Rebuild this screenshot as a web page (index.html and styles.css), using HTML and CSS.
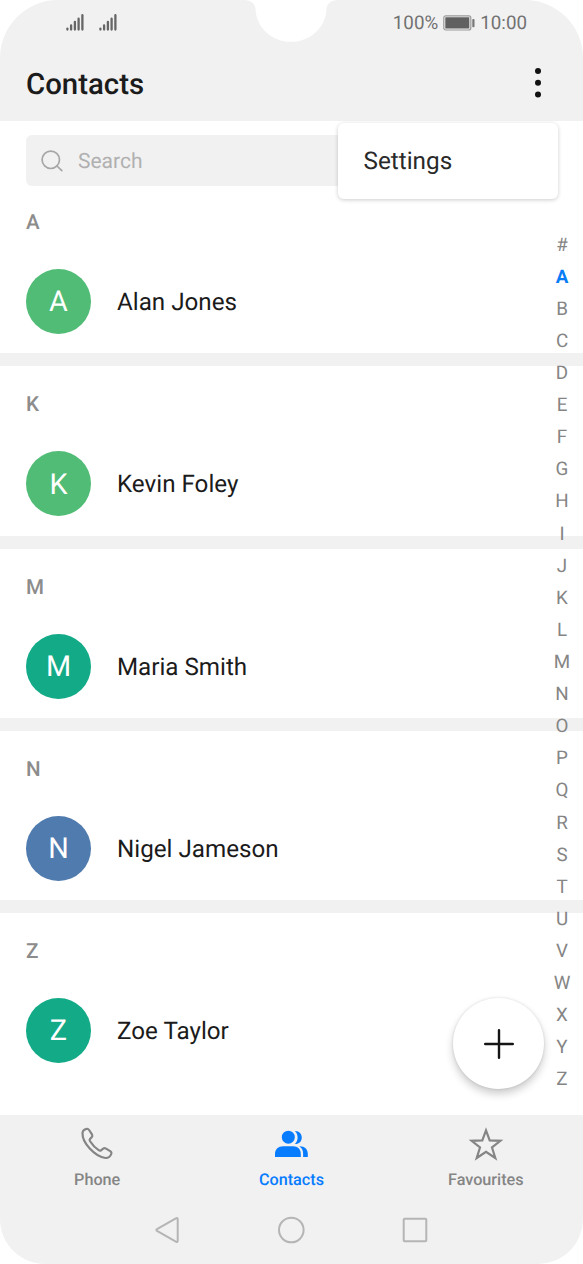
FILE: index.html
```html
<!DOCTYPE html>
<html lang="en">
<head>
<meta charset="utf-8">
<title>Contacts</title>
<link rel="stylesheet" href="styles.css">
</head>
<body>
<div class="screen">
  <svg class="notch" viewBox="0 0 94 42"><path d="M0 0C7 0 11.500 4 11.500 9.500C12.500 28 28 41.800 47 41.800S81.500 28 82.500 9.500C82.500 4 87 0 94 0Z" fill="#fff"/></svg>
  <header class="top">
    <div class="status">
      <div class="signals">
        <svg class="signal" viewBox="0 0 18 17"><path d="M1.400 14.600v.9M5.100 11.300v4.200M8.900 7.800v7.700M12.600 4.700v10.800M16.400 1.200v14.300"/></svg>
        <svg class="signal" viewBox="0 0 18 17"><path d="M1.400 14.600v.9M5.100 11.300v4.200M8.900 7.800v7.700M12.600 4.700v10.800M16.400 1.200v14.300"/></svg>
      </div>
      <div class="power">
        <span>100%</span>
        <svg class="battery" viewBox="0 0 32 16"><rect x=".8" y=".8" width="27" height="14.200" rx="2" fill="none" stroke="#999" stroke-width="1.200"/><rect x="2.300" y="2.300" width="24" height="11.200" rx=".5" fill="#606060"/><rect x="29.300" y="4" width="2.200" height="8.300" rx=".8" fill="#777"/></svg>
        <span>10:00</span>
      </div>
    </div>
    <div class="titlebar">
      <h1>Contacts</h1>
      <svg class="more" viewBox="0 0 8 32"><circle cx="4" cy="4" r="3"/><circle cx="4" cy="15.800" r="3"/><circle cx="4" cy="27.600" r="3"/></svg>
    </div>
    <div class="menu">Settings</div>
  </header>
  <main class="content">
    <div class="search">
      <svg viewBox="0 0 22 22"><circle cx="9.800" cy="9.800" r="8.700"/><path d="M16 16l4.800 4.600"/></svg>
      <span>Search</span>
    </div>
    <section class="group first"><h2>A</h2><div class="contact"><span class="avatar green">A</span><span class="name">Alan Jones</span></div></section>
    <section class="group"><h2>K</h2><div class="contact"><span class="avatar green">K</span><span class="name">Kevin Foley</span></div></section>
    <section class="group"><h2>M</h2><div class="contact"><span class="avatar teal">M</span><span class="name">Maria Smith</span></div></section>
    <section class="group"><h2>N</h2><div class="contact"><span class="avatar blue">N</span><span class="name">Nigel Jameson</span></div></section>
    <section class="group"><h2>Z</h2><div class="contact"><span class="avatar teal">Z</span><span class="name">Zoe Taylor</span></div></section>
    <nav class="index">
      <span>#</span><span class="current">A</span><span>B</span><span>C</span><span>D</span><span>E</span><span>F</span><span>G</span><span>H</span><span>I</span><span>J</span><span>K</span><span>L</span><span>M</span><span>N</span><span>O</span><span>P</span><span>Q</span><span>R</span><span>S</span><span>T</span><span>U</span><span>V</span><span>W</span><span>X</span><span>Y</span><span>Z</span>
    </nav>
    <button class="add" aria-label="Add contact"><svg viewBox="0 0 30 30"><path d="M15 1.200v27.600M1.200 15h27.600"/></svg></button>
  </main>
  <footer class="bottom">
    <nav class="tabs">
      <div class="tab"><svg viewBox="0 0 36 36"><path d="M3.500 7.200C3.700 5 5.300 3.200 7.600 2.800C8.800 2.600 9.500 3.100 10.100 4L13.100 8.700C13.700 9.700 13.300 10.500 12.600 11.300L11 13C10.500 13.600 10.500 14.300 10.900 15C13.200 18.700 16.200 21.900 20 24.400C20.700 24.800 21.400 24.800 22 24.300L24.200 22.600C25 22 25.700 21.900 26.600 22.400L31.200 25.100C32.400 25.800 32.600 26.800 32.200 28C31.300 30.500 29.300 32.100 26.500 32C15.500 30.500 3.200 16.500 3.500 7.200Z"/></svg><span>Phone</span></div>
      <div class="tab active"><svg viewBox="0 0 36 36"><circle cx="15.300" cy="11.200" r="6.500"/><path d="M2 31V28C2 23.300 5.300 20.300 10.100 20.300H20.100C24.800 20.300 27.800 23.300 27.800 28V31Z"/><path d="M21.900 4.900C25.900 4.700 28.800 7.600 28.800 11.400S25.900 18.100 21.900 17.900C23.800 16.100 24.600 13.900 24.600 11.400S23.800 6.700 21.900 4.900Z"/><path d="M26.300 20.300C31.600 20.100 34.800 23 34.800 28V31H30.100V27.500C30.100 24.300 28.800 22 26.300 20.300Z"/></svg><span>Contacts</span></div>
      <div class="tab"><svg viewBox="0 0 36 36"><path d="M18 4.400L21.700 14.400L32.400 14.800L24 21.500L27.300 32L18 25.800L8.700 32L12 21.500L3.600 14.800L14.300 14.400Z"/></svg><span>Favourites</span></div>
    </nav>
    <div class="system">
      <svg viewBox="0 0 28 28"><path d="M22.300 2.200C23.100 1.700 23.700 2 23.700 2.900V25.100C23.700 26 23.100 26.300 22.300 25.800L3 14.800C2.200 14.300 2.200 13.700 3 13.200Z"/></svg>
      <svg viewBox="0 0 28 28"><circle cx="14.300" cy="14" r="12.300"/></svg>
      <svg viewBox="0 0 28 28"><rect x="2.700" y="2.700" width="22.600" height="22.600" rx="1"/></svg>
    </div>
  </footer>
</div>
</body>
</html>
```
FILE: styles.css
```css
* { box-sizing: border-box; }
body { margin: 0; background: #fff; font-family: Roboto, "Liberation Sans", sans-serif; color: #1b1b1b; text-rendering: geometricPrecision; }
.screen { position: relative; width: 583px; height: 1264px; display: flex; flex-direction: column; }
.notch { position: absolute; z-index: 3; left: 244.300px; top: 0; width: 94px; height: 42px; }

.top { position: relative; z-index: 2; height: 121.300px; flex: none; background: #f1f1f1; border-radius: 58px 58px 0 0; }
.status { height: 45px; display: flex; justify-content: space-between; padding: 0 56px 0 66px; align-items: center; }
.signals { display: flex; gap: 14.600px; }
.signal { width: 18px; height: 17px; fill: none; stroke: #666; stroke-width: 2.300; stroke-linecap: round; }
.power { display: flex; align-items: center; font-size: 18.800px; line-height: 22px; color: #727272; }
.battery { width: 32px; height: 16px; margin: 0 5px; }
.titlebar { height: 76.300px; display: flex; align-items: center; justify-content: space-between; padding: 0 41.500px 0 26px; }
h1 { margin: 0; padding-top: 3.500px; font-size: 29.400px; font-weight: 500; line-height: 34px; }
.more { width: 8px; height: 32px; fill: #111; }
.menu { position: absolute; left: 338px; top: 122.700px; width: 219.500px; height: 76px; display: flex; align-items: center; padding-left: 25.500px; background: #fff; border-radius: 6px; font-size: 24.300px; color: #292929; box-shadow: 0 1px 4px rgba(0, 0, 0, .2); }

.content { position: relative; flex: 1; min-height: 0; padding-top: 13.600px; }
.search { margin: 0 26px; height: 51px; display: flex; align-items: center; gap: 15px; padding: 1.500px 15px 0; background: #f1f1f1; border-radius: 6px; font-size: 21px; color: #b0b0b0; }
.search span { padding-top: 1.500px; }
.search svg { width: 22px; height: 22px; fill: none; stroke: #a6a6a6; stroke-width: 1.700; stroke-linecap: round; }
.group { height: 182.300px; padding: 27.100px 26px 0; border-top: 13px solid #f1f1f1; }
.group.first { height: 167.400px; padding-top: 25px; border: 0; }
h2 { margin: 0; font-size: 20.600px; font-weight: 500; line-height: 24px; color: #8c8c8c; }
.contact { margin-top: 34px; display: flex; align-items: center; gap: 26px; font-size: 24.200px; }
.name { padding-top: .8px; }
.avatar { width: 65px; height: 65px; padding-top: 1.400px; border-radius: 50%; display: grid; place-items: center; color: #fff; font-size: 28.800px; }
.green { background: #50bc75; }
.teal { background: #12aa87; }
.blue { background: #507bae; }
.index { position: absolute; right: 1px; top: 107.250px; width: 40px; display: flex; flex-direction: column; text-align: center; font-size: 18.800px; line-height: 32.110px; color: #858585; }
.index .current { color: #087cf5; font-weight: 700; }
.add { position: absolute; left: 453.300px; top: 877px; width: 90.800px; height: 90.800px; border: 0; padding: 0; border-radius: 50%; background: #fff; display: grid; place-items: center; box-shadow: 0 5px 9px rgba(0, 0, 0, .2), 0 0 3px rgba(0, 0, 0, .12); }
.add svg { width: 30px; height: 30px; fill: none; stroke: #151515; stroke-width: 2.400; stroke-linecap: round; }

.bottom { height: 149.200px; flex: none; background: #f1f1f1; border-radius: 0 0 45px 45px; }
.tabs { display: grid; grid-template-columns: repeat(3, 1fr); padding-top: 11px; }
.tab { display: flex; flex-direction: column; align-items: center; font-size: 16.200px; font-weight: 500; line-height: 20px; color: #858585; gap: 7.800px; }
.tab svg { width: 36px; height: 36px; fill: none; stroke: #858585; stroke-width: 2.200; stroke-linejoin: miter; }
.tab.active { color: #087cff; }
.tab.active svg { fill: #087cff; stroke: none; }
.system { display: flex; justify-content: center; gap: 95.300px; padding: 26.200px .4px 0 0; }
.system svg { width: 28px; height: 28px; fill: none; stroke: #b5b5b5; stroke-width: 2; }
```
